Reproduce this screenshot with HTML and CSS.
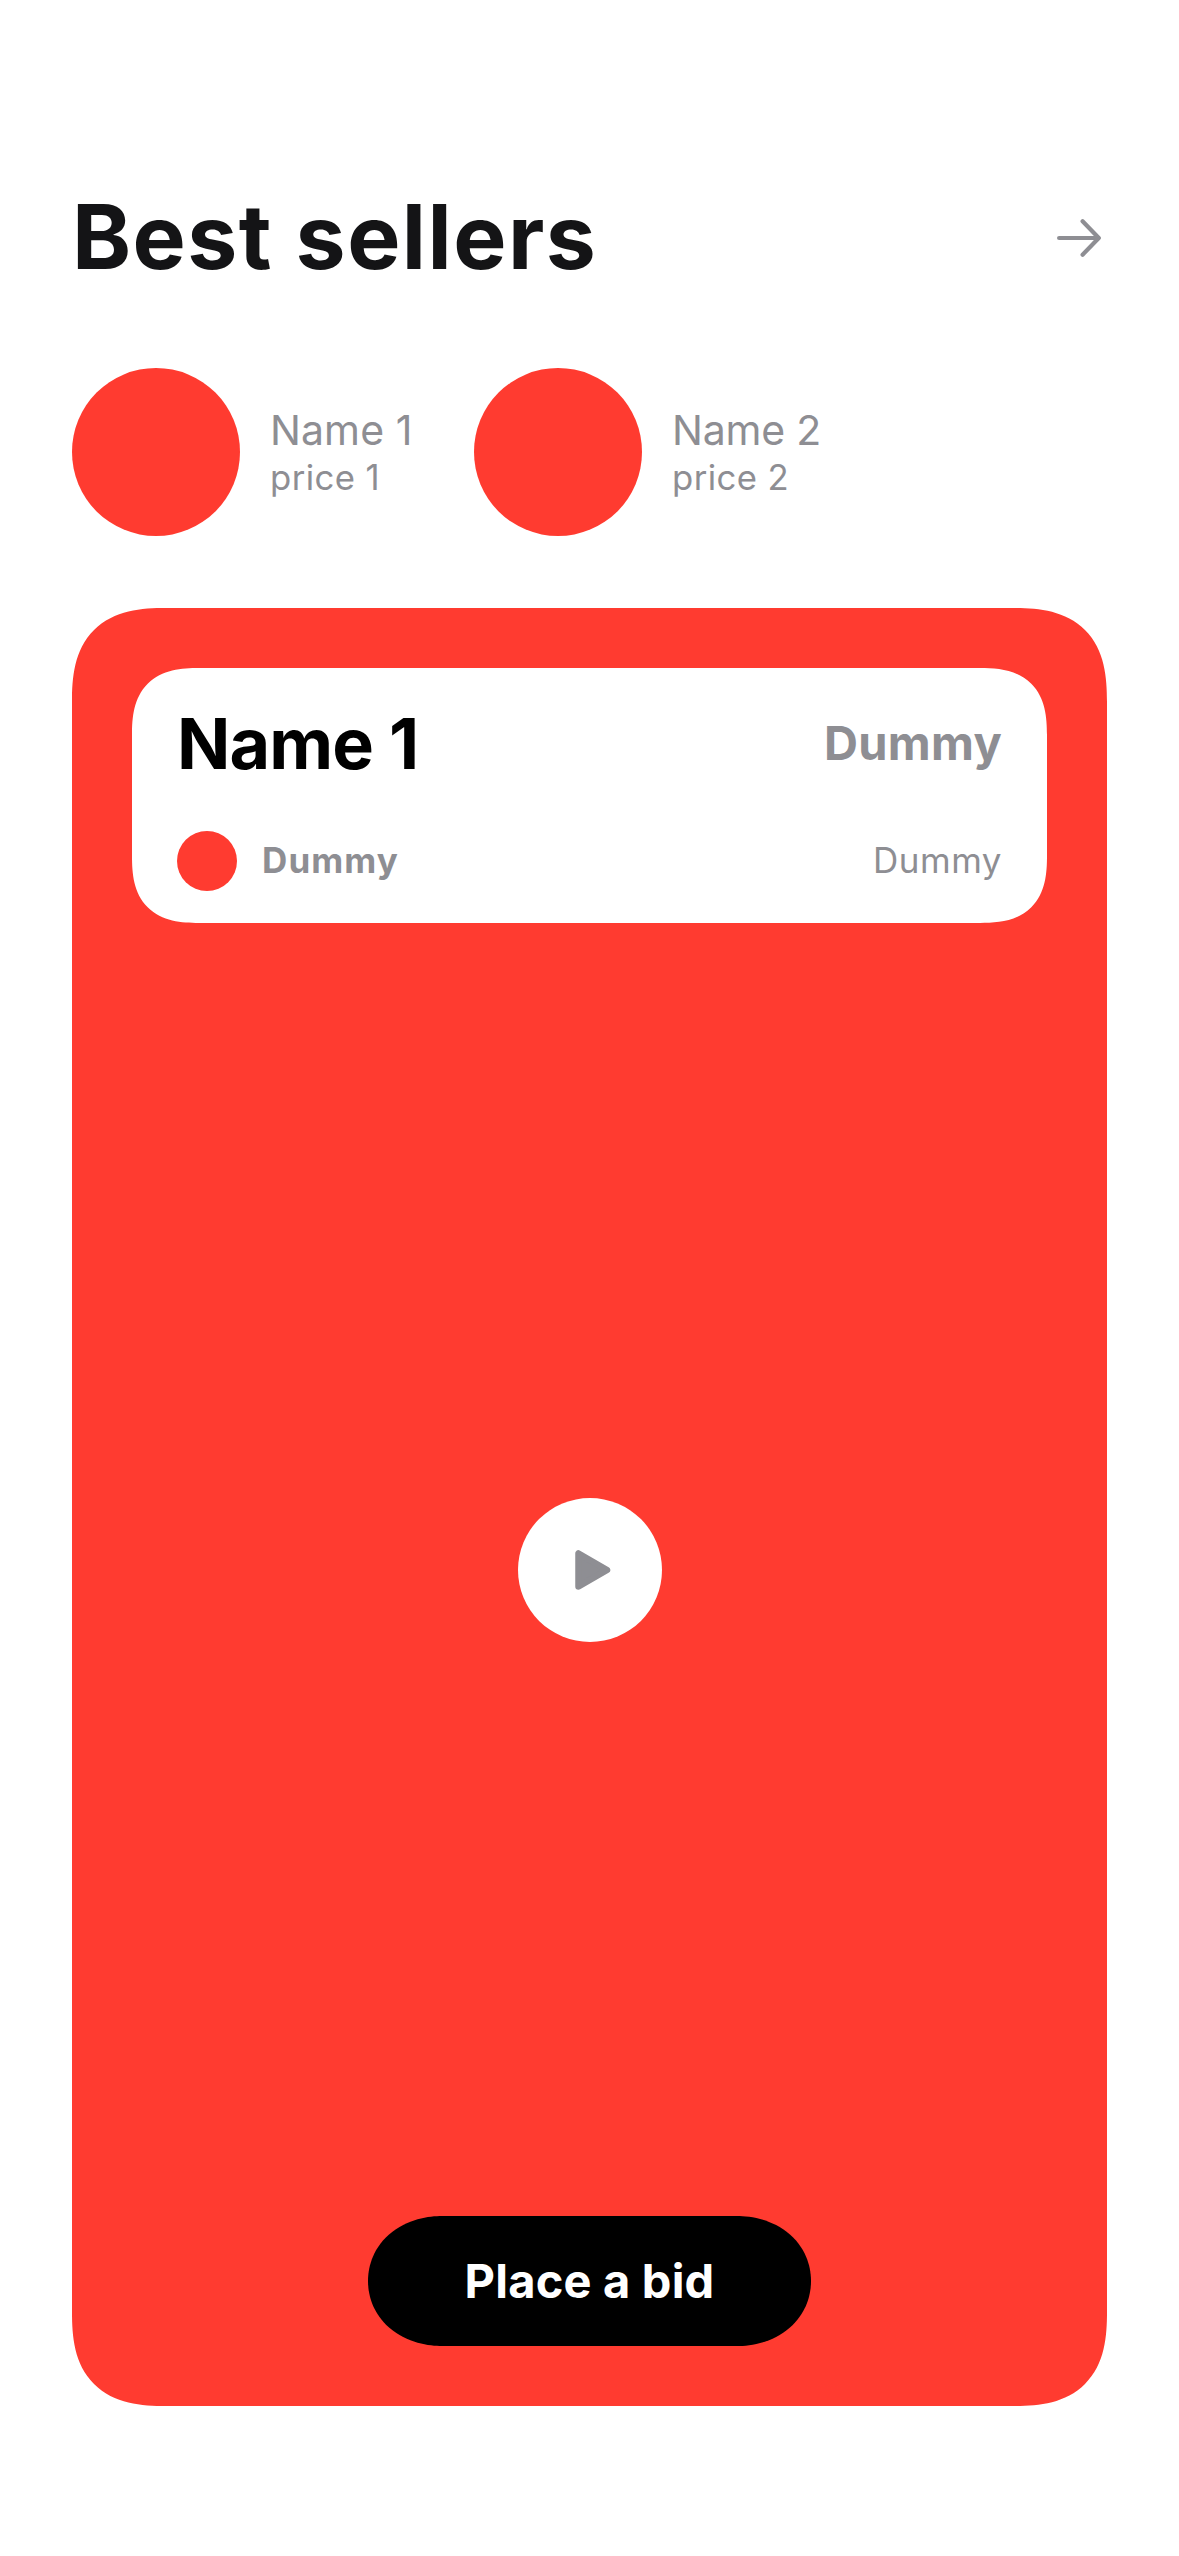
FILE: index.html
```html
<!DOCTYPE html>
<html lang="en">
<head>
<meta charset="utf-8">
<title>Best sellers</title>
<link rel="stylesheet" href="styles.css">
</head>
<body>
<main class="screen">
  <header class="header">
    <h1 class="title">Best sellers</h1>
    <svg class="arrow" viewBox="0 0 50 46" aria-hidden="true">
      <path d="M2.1 23H41.5M25.6 6.3L41.8 23L25.6 39.7"/>
    </svg>
  </header>

  <section class="sellers">
    <article class="seller">
      <div class="avatar"></div>
      <div class="seller-text">
        <span class="seller-name">Name 1</span>
        <span class="seller-price">price 1</span>
      </div>
    </article>
    <article class="seller">
      <div class="avatar"></div>
      <div class="seller-text">
        <span class="seller-name seller-name-wide">Name 2</span>
        <span class="seller-price">price 2</span>
      </div>
    </article>
  </section>

  <section class="card">
    <div class="panel">
      <div class="panel-row">
        <h2 class="panel-name">Name 1</h2>
        <span class="panel-value">Dummy</span>
      </div>
      <div class="panel-row">
        <div class="owner">
          <div class="owner-avatar"></div>
          <span class="owner-name">Dummy</span>
        </div>
        <span class="panel-note">Dummy</span>
      </div>
    </div>

    <div class="play">
      <svg class="play-icon" viewBox="0 0 36 40" aria-hidden="true">
        <path d="M3.5 3.5V36.5L32 20Z"/>
      </svg>
    </div>

    <button class="bid" type="button">Place a bid</button>
  </section>
</main>
</body>
</html>
```
FILE: styles.css
```css
* {
  box-sizing: border-box;
}

body {
  margin: 0;
  background: #fff;
  color: #8e8e93;
  font-family: Inter, "Liberation Sans", sans-serif;
}

h1,
h2 {
  margin: 0;
}

.screen {
  display: flex;
  flex-direction: column;
  height: 2556px;
  padding: 192px 72px 150px;
}

.header {
  display: flex;
  align-items: center;
  justify-content: space-between;
  height: 92px;
  margin-bottom: 84px;
}

.title {
  padding-bottom: 3px;
  color: #141416;
  font-size: 89.4px;
  font-weight: 650;
  line-height: 89px;
  letter-spacing: 1.45px;
}

.arrow {
  width: 50px;
  height: 46px;
  fill: none;
  stroke: #8e8e93;
  stroke-width: 4.2;
  stroke-linecap: round;
  stroke-linejoin: round;
}

.sellers {
  display: flex;
  gap: 60px;
  margin-bottom: 72px;
}

.seller {
  display: flex;
  align-items: center;
  gap: 30px;
}

.avatar {
  width: 168px;
  height: 168px;
  border-radius: 50%;
  background: #ff3b30;
}

.seller-text {
  display: flex;
  flex-direction: column;
  min-width: 144px;
  white-space: nowrap;
}

.seller-name {
  font-size: 41px;
  line-height: 50px;
  letter-spacing: 0.1px;
}

.seller-name-wide {
  letter-spacing: -0.2px;
}

.seller-price {
  font-size: 34.7px;
  line-height: 44px;
  letter-spacing: 0.4px;
}

.card {
  display: flex;
  flex: 1;
  flex-direction: column;
  align-items: center;
  justify-content: space-between;
  padding: 60px;
  border-radius: 94px;
  corner-shape: superellipse(1.376);
  background: #ff3b30;
}

.panel {
  display: flex;
  flex-direction: column;
  gap: 45px;
  align-self: stretch;
  padding: 33px 45px 32px;
  border-radius: 67px;
  corner-shape: superellipse(1.376);
  background: #fff;
}

.panel-row {
  display: flex;
  align-items: center;
  justify-content: space-between;
}

.panel-name {
  color: #000;
  font-size: 70px;
  font-weight: 700;
  line-height: 85px;
  letter-spacing: -0.85px;
}

.panel-value {
  padding-bottom: 1px;
  font-size: 47px;
  font-weight: 700;
  line-height: 84px;
  letter-spacing: 0.3px;
}

.owner {
  display: flex;
  align-items: center;
  gap: 25px;
}

.owner-avatar {
  width: 60px;
  height: 60px;
  border-radius: 50%;
  background: #ff3b30;
}

.owner-name,
.panel-note {
  padding-bottom: 1px;
  font-size: 35px;
  line-height: 43px;
}

.owner-name {
  font-weight: 700;
  letter-spacing: 1.1px;
}

.panel-note {
  letter-spacing: 0.5px;
}

.play {
  display: grid;
  place-items: center;
  width: 144px;
  height: 144px;
  padding-left: 6px;
  border-radius: 50%;
  background: #fff;
}

.play-icon {
  width: 36px;
  height: 40px;
  fill: #8e8e93;
  stroke: #8e8e93;
  stroke-width: 6.5;
  stroke-linejoin: round;
}

.bid {
  width: 443px;
  height: 130px;
  padding: 0 0 2px;
  border: 0;
  border-radius: 74px / 65px;
  corner-shape: superellipse(1.05);
  background: #000;
  color: #fff;
  font: 700 47px Inter, "Liberation Sans", sans-serif;
  letter-spacing: 0.2px;
}
```
